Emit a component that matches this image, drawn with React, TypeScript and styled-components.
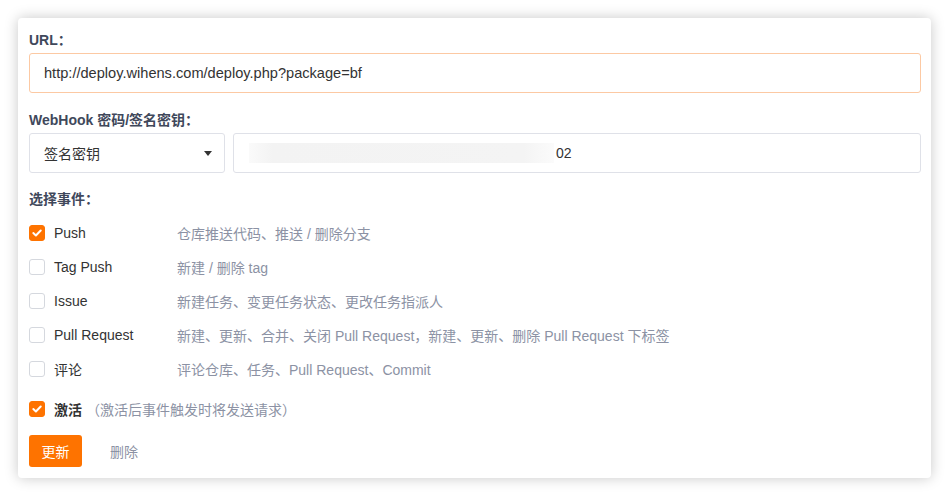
import React from "react";
import styled, { createGlobalStyle } from "styled-components";

const Global = createGlobalStyle`
  html, body { margin: 0; padding: 0; background: #ffffff; }
  body { font-family: "Liberation Sans", "Noto Sans CJK SC", sans-serif; -webkit-font-smoothing: antialiased; }
  * { box-sizing: border-box; }
`;

const Page = styled.div`
  padding: 18px;
  width: 949px;
  height: 496px;
`;

const Card = styled.div`
  width: 913px;
  background: #fff;
  border-radius: 4px;
  box-shadow: 0 0 14px rgba(0, 0, 0, 0.22);
  padding: 12px 10px 11px 11px;
  display: flex;
  flex-direction: column;
  & > * { flex-shrink: 0; }
`;

const FieldLabel = styled.div<{ $top?: number }>`
  font-size: 14px;
  line-height: 20px;
  font-weight: 700;
  color: #40485b;
  margin-top: ${(p) => p.$top ?? 0}px;
  margin-bottom: 3px;
`;

const TextInput = styled.div<{ $focused?: boolean; $size?: number }>`
  height: 40px;
  border: 1px solid ${(p) => (p.$focused ? "#fcc9a3" : "#dfe1e8")};
  border-radius: 3px;
  display: flex;
  align-items: center;
  padding: 0 14px;
  font-size: ${(p) => p.$size ?? 14}px;
  color: #333;
`;

const SecretRow = styled.div`
  display: flex;
  gap: 8px;
  & > :last-child { flex: 1; }
`;

const Select = styled.div`
  width: 196px;
  height: 40px;
  border: 1px solid #dfe1e8;
  border-radius: 3px;
  display: flex;
  align-items: center;
  justify-content: space-between;
  padding: 0 12px 0 14px;
  font-size: 14px;
  color: #333;
`;

const Caret = styled.span`
  width: 0;
  height: 0;
  border-left: 4px solid transparent;
  border-right: 4px solid transparent;
  border-top: 5px solid #333;
`;

const Blur = styled.span`
  display: inline-block;
  width: 305px;
  height: 20px;
  background: linear-gradient(90deg, #fafafa 0%, #f3f3f3 8%, #f4f4f4 90%, #fbfbfb 100%);
  margin-right: 2px;
`;

const SecretText = styled.span`
  display: flex;
  align-items: center;
  margin-left: 1px;
`;

const EventList = styled.div`
  display: flex;
  flex-direction: column;
  margin-top: 4px;
`;

const EventRow = styled.div`
  display: grid;
  grid-template-columns: 148px 1fr;
  height: 34px;
  align-items: center;
`;

const CheckWrap = styled.div`
  display: flex;
  align-items: center;
  gap: 9px;
`;

const Box = styled.span<{ $on?: boolean }>`
  width: 16px;
  height: 16px;
  border-radius: 3px;
  background: ${(p) => (p.$on ? "#fe7300" : "#fff")};
  border: 1px solid ${(p) => (p.$on ? "#fe7300" : "#d5d8de")};
  display: flex;
  align-items: center;
  justify-content: center;
  flex-shrink: 0;
`;

const EventName = styled.span<{ $bold?: boolean }>`
  font-size: 14px;
  color: #333;
  font-weight: ${(p) => (p.$bold ? 700 : 400)};
`;

const Desc = styled.span`
  font-size: 14px;
  color: #8c92a4;
`;

const ActiveRow = styled.div`
  display: flex;
  align-items: center;
  height: 34px;
  margin-top: 6px;
  gap: 9px;
`;

const ActiveHint = styled.span`
  font-size: 14px;
  color: #8c92a4;
  margin-left: -5px;
`;

const Actions = styled.div`
  display: flex;
  align-items: center;
  margin-top: 9px;
  gap: 28px;
`;

const Primary = styled.button`
  height: 32px;
  width: 53px;
  border: none;
  border-radius: 3px;
  background: #fe7300;
  color: #fff;
  font-size: 14px;
  font-family: inherit;
  padding: 0;
`;

const Ghost = styled.button`
  border: none;
  background: none;
  color: #8c92a4;
  font-size: 14px;
  font-family: inherit;
  padding: 0;
`;

const Check = () => (
  <svg width="10" height="8" viewBox="0 0 10 8">
    <path d="M1.3 4.1 L3.9 6.5 L8.7 1.5" fill="none" stroke="#fff" strokeWidth="2" strokeLinecap="round" strokeLinejoin="round" />
  </svg>
);

const events = [
  { name: "Push", desc: "仓库推送代码、推送 / 删除分支", on: true },
  { name: "Tag Push", desc: "新建 / 删除 tag", on: false },
  { name: "Issue", desc: "新建任务、变更任务状态、更改任务指派人", on: false },
  { name: "Pull Request", desc: "新建、更新、合并、关闭 Pull Request，新建、更新、删除 Pull Request 下标签", on: false },
  { name: "评论", desc: "评论仓库、任务、Pull Request、Commit", on: false },
];

export default function App() {
  return (
    <Page>
      <Global />
      <Card>
        <FieldLabel>URL：</FieldLabel>
        <TextInput $focused $size={14.6}>http://deploy.wihens.com/deploy.php?package=bf</TextInput>
        <FieldLabel $top={17}>WebHook 密码/签名密钥：</FieldLabel>
        <SecretRow>
          <Select>
            签名密钥
            <Caret />
          </Select>
          <TextInput>
            <SecretText>
              <Blur />
              02
            </SecretText>
          </TextInput>
        </SecretRow>
        <FieldLabel $top={16}>选择事件：</FieldLabel>
        <EventList>
          {events.map((e) => (
            <EventRow key={e.name}>
              <CheckWrap>
                <Box $on={e.on}>{e.on && <Check />}</Box>
                <EventName>{e.name}</EventName>
              </CheckWrap>
              <Desc>{e.desc}</Desc>
            </EventRow>
          ))}
        </EventList>
        <ActiveRow>
          <Box $on>
            <Check />
          </Box>
          <EventName $bold>激活</EventName>
          <ActiveHint>（激活后事件触发时将发送请求）</ActiveHint>
        </ActiveRow>
        <Actions>
          <Primary>更新</Primary>
          <Ghost>删除</Ghost>
        </Actions>
      </Card>
    </Page>
  );
}
